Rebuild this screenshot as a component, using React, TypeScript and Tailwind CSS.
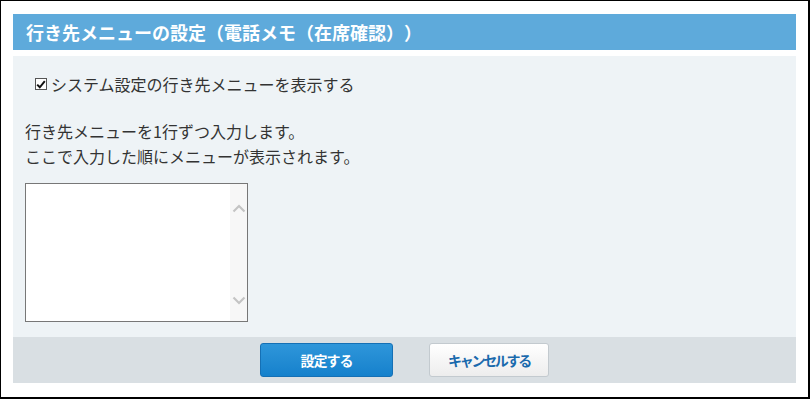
import React from "react";

const jp = { fontFamily: '"Noto Sans CJK JP", "Liberation Sans", sans-serif' };

function Chevron({ up }: { up?: boolean }) {
  return (
    <svg width="14" height="9" viewBox="0 0 14 9" className="block">
      <path
        d={up ? "M1.5 7.5 L7 2 L12.5 7.5" : "M1.5 1.5 L7 7 L12.5 1.5"}
        fill="none"
        stroke="#c4c4c4"
        strokeWidth="2.2"
      />
    </svg>
  );
}

export default function App() {
  return (
    <div
      className="w-[810px] h-[399px] bg-white border-l border-t border-r-2 border-b-2 border-black px-3 pt-[13px] text-[#333] [text-spacing-trim:space-all]"
      style={jp}
    >
      <div className="h-[36px] bg-[#5eaadb] flex items-center pl-[13px] text-white font-bold text-[18px] leading-none">
        行き先メニューの設定（電話メモ（在席確認））
      </div>
      <div className="mt-[6px] bg-[#eef3f6] h-[281px] pl-[12px] pt-[18px]">
        <label className="flex items-center ml-[10px] text-[16px] leading-[20px]">
          <span className="w-[12px] h-[12px] border border-[#555] bg-white flex items-center justify-center mr-[4px]">
            <svg width="10" height="9" viewBox="0 0 10 9">
              <path d="M1.2 4.6 L3.8 7.3 L8.8 1.2" fill="none" stroke="#111" strokeWidth="2" />
            </svg>
          </span>
          システム設定の行き先メニューを表示する
        </label>
        <div className="mt-[25px] text-[16px] leading-[25px]">
          <p>行き先メニューを1行ずつ入力します。</p>
          <p>ここで入力した順にメニューが表示されます。</p>
        </div>
        <div className="mt-[14px] w-[223px] h-[139px] border border-[#777] bg-white flex">
          <div className="flex-1" />
          <div className="w-[17px] bg-[#f7f7f7] flex flex-col items-center justify-between pt-[20px] pb-[16px]">
            <Chevron up />
            <Chevron />
          </div>
        </div>
      </div>
      <div className="h-[46px] bg-[#d9dfe3] flex items-center justify-center gap-[36px]">
        <button className="w-[133px] h-[34px] rounded-[3px] border border-[#1570b5] bg-gradient-to-b from-[#2e96da] to-[#1581cc] text-white font-bold text-[14px] tracking-[-1px]">
          設定する
        </button>
        <button className="w-[120px] h-[34px] rounded-[3px] border border-[#c3cacf] bg-gradient-to-b from-white to-[#ededed] text-[#1a6aad] font-bold text-[14px] tracking-[-2.3px]">
          キャンセルする
        </button>
      </div>
    </div>
  );
}
